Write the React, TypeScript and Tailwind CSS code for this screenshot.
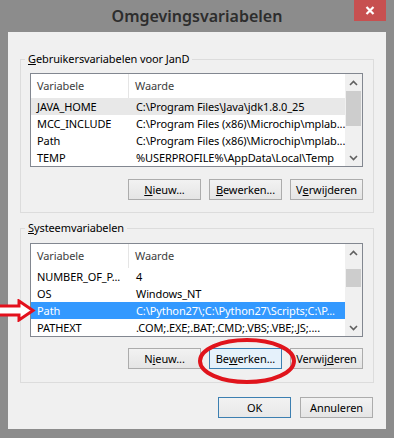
import React from "react";

type Row = { name: string; value: string };

const userRows: Row[] = [
  { name: "JAVA_HOME", value: "C:\\Program Files\\Java\\jdk1.8.0_25" },
  { name: "MCC_INCLUDE", value: "C:\\Program Files (x86)\\Microchip\\mplab..." },
  { name: "Path", value: "C:\\Program Files (x86)\\Microchip\\mplab..." },
  { name: "TEMP", value: "%USERPROFILE%\\AppData\\Local\\Temp" },
];

const systemRows: Row[] = [
  { name: "NUMBER_OF_P...", value: "4" },
  { name: "OS", value: "Windows_NT" },
  { name: "Path", value: "C:\\Python27\\;C:\\Python27\\Scripts;C:\\P..." },
  { name: "PATHEXT", value: ".COM;.EXE;.BAT;.CMD;.VBS;.VBE;.JS;...." },
];

function Chevron({ down }: { down?: boolean }) {
  return (
    <svg width="9" height="6" viewBox="0 0 9 6" className={down ? "rotate-180" : ""}>
      <path d="M1 5 L4.5 1.5 L8 5" fill="none" stroke="#606060" strokeWidth="1.6" />
    </svg>
  );
}

function ListView({
  rows,
  soft,
  selected,
  thumbOffset,
  thumbClass,
}: {
  rows: Row[];
  soft?: number;
  selected?: number;
  thumbOffset: string;
  thumbClass: string;
}) {
  return (
    <div className="flex h-[94px] min-w-0 border border-[#828790] bg-white">
      <div className="flex min-w-0 flex-1 flex-col overflow-hidden">
        <div className="flex h-[24px] items-center text-[#404040]">
          <div className="flex h-full w-[98px] items-center border-r border-[#e5e5e5] pl-[6px]">Variabele</div>
          <div className="pl-[6px]">Waarde</div>
        </div>
        {rows.map((r, i) => (
          <div
            key={r.name}
            className={
              "flex h-[17px] items-center whitespace-nowrap " +
              (i === selected ? "bg-[#3399ff] text-white" : i === soft ? "bg-[#e8e8e8] text-black" : "text-black")
            }
          >
            <div className="w-[98px] shrink-0 overflow-hidden pl-[6px]">{r.name}</div>
            <div className="min-w-0 flex-1 overflow-hidden pl-[7px]">{r.value}</div>
          </div>
        ))}
      </div>
      <div className="flex w-[17px] shrink-0 flex-col bg-[#f0f0f0]">
        <div className="flex h-[17px] items-center justify-center">
          <Chevron />
        </div>
        <div className="flex-1">
          <div className={"mx-auto w-[15px] bg-[#cdcdcd] " + thumbOffset + " " + thumbClass} />
        </div>
        <div className="flex h-[17px] items-center justify-center">
          <Chevron down />
        </div>
      </div>
    </div>
  );
}

function Btn({ children, variant }: { children: React.ReactNode; variant?: "hover" | "default" }) {
  const cls =
    variant === "hover"
      ? "border-[#3c7fb1] bg-[#e5f1fb]"
      : variant === "default"
      ? "border-[#3c7fb1] bg-gradient-to-b from-[#f2f2f2] to-[#e8e8e8]"
      : "border-[#acacac] bg-gradient-to-b from-[#f2f2f2] to-[#e5e5e5]";
  return (
    <div className={"flex h-[21px] w-[73px] items-center justify-center border text-black " + cls}>{children}</div>
  );
}

export default function App() {
  return (
    <div className="relative flex h-[438px] w-[394px] flex-col bg-[#8c8c8c] font-['Segoe_UI','Noto_Sans',sans-serif] text-[11px] leading-[16px] tracking-[-0.1px]">
      <div className="relative flex h-[32px] items-center justify-center">
        <span className="text-[16px] font-semibold tracking-normal text-[#2d2d2d]">Omgevingsvariabelen</span>
        <div className="absolute right-[8px] top-0 flex h-[21px] w-[32px] items-center justify-center bg-[#c75050]">
          <svg width="10" height="9" viewBox="0 0 10 9">
            <path d="M1.5 1 L8.5 8 M8.5 1 L1.5 8" stroke="white" strokeWidth="2.2" />
          </svg>
        </div>
      </div>

      <div className="mx-[8px] flex h-[397px] flex-col bg-[#f0f0f0] px-[12px] pt-[19px]">
        <fieldset className="min-w-0 border border-[#dcdcdc] pb-[12px] pl-[9px] pr-[10px] pt-[6px]">
          <legend className="-ml-[5px] px-[3px] text-black">
            <u>G</u>ebruikersvariabelen voor JanD
          </legend>
          <ListView rows={userRows} soft={0} thumbOffset="mt-0" thumbClass="h-[35px]" />
          <div className="mt-[12px] flex justify-end gap-[8px]">
            <Btn>
              <u>N</u>ieuw...
            </Btn>
            <Btn>
              <u>B</u>ewerken...
            </Btn>
            <Btn>
              V<u>e</u>rwijderen
            </Btn>
          </div>
        </fieldset>

        <fieldset className="mt-[7px] min-w-0 border border-[#dcdcdc] pb-[13px] pl-[9px] pr-[10px] pt-[7px]">
          <legend className="-ml-[5px] px-[3px] text-black">
            <u>S</u>ysteemvariabelen
          </legend>
          <ListView rows={systemRows} selected={2} thumbOffset="mt-[8px]" thumbClass="h-[18px]" />
          <div className="mt-[11px] flex justify-end gap-[8px]">
            <Btn>
              N<u>i</u>euw...
            </Btn>
            <Btn variant="hover">
              Be<u>w</u>erken...
            </Btn>
            <Btn>
              Verwij<u>d</u>eren
            </Btn>
          </div>
        </fieldset>

        <div className="mt-[14px] flex justify-end gap-[9px] pr-[1px]">
          <Btn variant="default">OK</Btn>
          <Btn>Annuleren</Btn>
        </div>
      </div>

      <svg className="absolute left-0 top-[299px]" width="36" height="23" viewBox="0 0 36 23">
        <path
          d="M0 7 H19 V2 L33 11.5 L19 21 V16 H0"
          fill="white"
          stroke="#e3101c"
          strokeWidth="3"
          strokeLinejoin="miter"
        />
      </svg>

      <svg className="absolute left-[197px] top-[337px]" width="102" height="48" viewBox="0 0 102 48">
        <ellipse cx="50" cy="24" rx="47" ry="21" fill="none" stroke="#e0141c" strokeWidth="4" />
      </svg>
    </div>
  );
}
